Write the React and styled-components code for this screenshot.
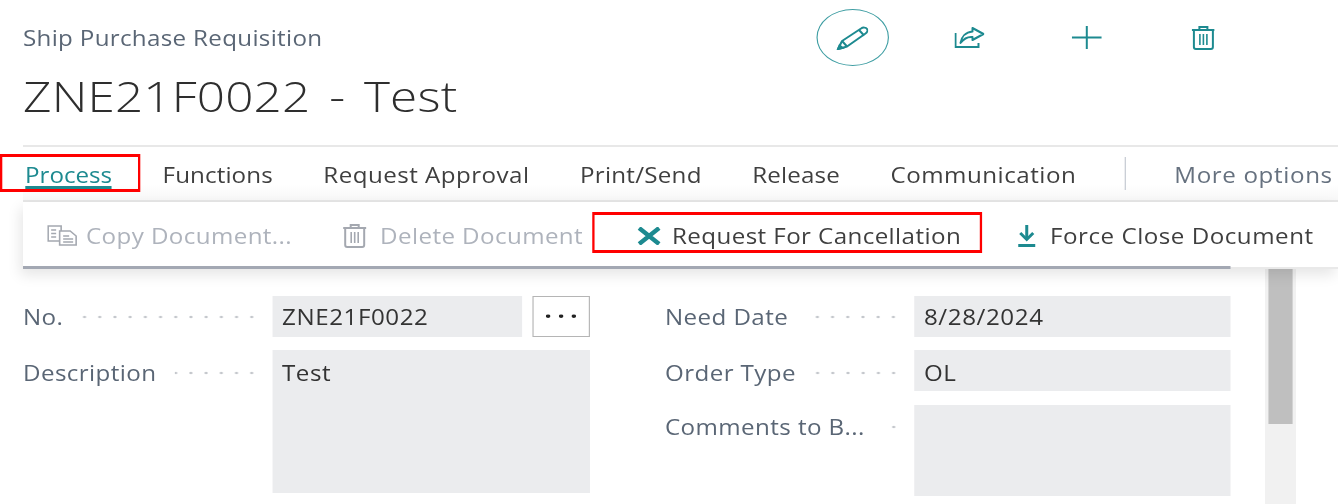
import React from "react";
import styled, { createGlobalStyle } from "styled-components";

const GlobalStyle = createGlobalStyle`
  html, body {
    margin: 0;
    padding: 0;
    background: #fff;
    overflow: hidden;
  }
  * { box-sizing: border-box; }
`;

const TEAL = "#1d8a90";

// the whole capture is wider than it is tall, so the page is laid out narrow and stretched
const STRETCH = 1.15;
const sx = (n) => +(n / STRETCH).toFixed(2);

const tabs = [
  { label: "Functions", spacing: 0.1 },
  { label: "Request Approval", spacing: 0.4 },
  { label: "Print/Send", spacing: 0.22 },
  { label: "Release", spacing: 0.14 },
  { label: "Communication", spacing: 0.45 },
];

const Icon = ({ w, h, children, stroke = TEAL, weight = 2 }) => (
  <svg
    width={sx(w)}
    height={h}
    viewBox={`0 0 ${w} ${h}`}
    preserveAspectRatio="none"
    fill="none"
    stroke={stroke}
    strokeWidth={weight}
  >
    {children}
  </svg>
);

const PencilIcon = () => (
  <Icon w={32} h={24}>
    <path d="M2 23 L6 15 L25 2.5 C27 1 30 1.5 31 3 C32 4.5 31 6.5 29.5 7.5 L11 20.5 Z" strokeLinejoin="round" />
    <path d="M6 15 L11 20.5 M23 4 L28 9.5" />
    <path d="M2 23 L3.5 19.5 L6.5 22 Z" fill={TEAL} />
  </Icon>
);

const ShareIcon = () => (
  <Icon w={30} h={21}>
    <path d="M1 6 V20 H24 V16" />
    <path d="M18 1 L29 7 L18 13 V10 C13 9.5 9 12 6 16 C7 10 11 5 18 4.5 Z" strokeLinejoin="round" />
  </Icon>
);

const PlusIcon = () => (
  <Icon w={30} h={23}>
    <path d="M0 11.5 H30 M15 0 V23" />
  </Icon>
);

const TrashIcon = ({ color = TEAL }) => (
  <Icon w={24} h={24} stroke={color} weight={2}>
    <path d="M0.5 4 H23.5" />
    <path d="M8 4 V1 H16 V4" />
    <path d="M2.5 4 V21 C2.5 22.2 3.3 23 4.5 23 H19.5 C20.7 23 21.5 22.2 21.5 21 V4" />
    <path d="M8.5 8 V19 M12 8 V19 M15.5 8 V19" strokeWidth="1.6" />
  </Icon>
);

const CopyIcon = () => (
  <Icon w={30} h={21} stroke="#a4a8b0" weight={1.6}>
    <path d="M12 16 H1 V1 H14 V6" />
    <path d="M12.5 6 H23 L29 11 V20 H12.5 Z" />
    <path d="M4 5 H9 M4 8.5 H9 M4 12 H9 M16 11 H22 M16 14 H26 M16 17 H26" />
  </Icon>
);

const CrossIcon = () => (
  <Icon w={24} h={18} weight={4.4}>
    <path d="M2 1 L22 17 M22 1 L2 17" />
  </Icon>
);

const DownIcon = () => (
  <Icon w={18} h={22} weight={3}>
    <path d="M9 0 V13" />
    <path d="M2.5 8 L9 14.5 L15.5 8" />
    <path d="M0.5 20.5 H17.5" />
  </Icon>
);

const App = () => {
  return (
    <Page>
      <GlobalStyle />
      <Header>
        <TitleBlock>
          <Caption>Ship Purchase Requisition</Caption>
          <Title>ZNE21F0022 - Test</Title>
        </TitleBlock>
        <Actions>
          <EditButton><PencilIcon /></EditButton>
          <ActionIcon $width={160}><ShareIcon /></ActionIcon>
          <ActionIcon $width={76}><PlusIcon /></ActionIcon>
          <ActionIcon $width={156}><TrashIcon /></ActionIcon>
        </Actions>
      </Header>

      <TabBar>
        <ActiveTab>
          <TabLabel $active $spacing={0}>Process</TabLabel>
          <RedFrame $box="tab" />
        </ActiveTab>
        {tabs.map((t) => (
          <TabLabel key={t.label} $spacing={t.spacing}>{t.label}</TabLabel>
        ))}
        <TabDivider />
        <MoreOptions $spacing={0.55}>More options</MoreOptions>
      </TabBar>

      <CommandPanel>
        <Command $disabled>
          <CopyIcon />
          <span>Copy Document...</span>
        </Command>
        <Command $disabled $gap={13} $left={51}>
          <TrashIcon color="#a4a8b0" />
          <span>Delete Document</span>
        </Command>
        <MarkedCommand>
          <CrossIcon />
          <span>Request For Cancellation</span>
          <RedFrame $box="command" />
        </MarkedCommand>
        <Command $gap={14} $left={36}>
          <DownIcon />
          <ForceLabel>Force Close Document</ForceLabel>
        </Command>
      </CommandPanel>

      <Body>
        <FormColumn $width={567}>
          <FieldRow $line={41}>
            <FieldLabel>
              <LabelText>No.</LabelText>
              <Leader />
            </FieldLabel>
            <Value>ZNE21F0022</Value>
            <DotsButton>···</DotsButton>
          </FieldRow>
          <FieldRow>
            <FieldLabel>
              <LabelText>Description</LabelText>
              <Leader />
            </FieldLabel>
            <Value $height={143}>Test</Value>
          </FieldRow>
        </FormColumn>
        <FormColumn $width={566} $left={75}>
          <FieldRow $line={41}>
            <FieldLabel>
              <LabelText>Need Date</LabelText>
              <Leader />
            </FieldLabel>
            <Value>8/28/2024</Value>
          </FieldRow>
          <FieldRow>
            <FieldLabel>
              <LabelText>Order Type</LabelText>
              <Leader />
            </FieldLabel>
            <Value>OL</Value>
          </FieldRow>
          <FieldRow $top={1} $line={43}>
            <FieldLabel>
              <LabelText>Comments to B...</LabelText>
              <Leader />
            </FieldLabel>
            <Value $height={91} />
          </FieldRow>
        </FormColumn>
        <ScrollTrack>
          <ScrollThumb />
        </ScrollTrack>
      </Body>
    </Page>
  );
};

const Page = styled.div`
  width: ${sx(1340)}px;
  height: 504px;
  overflow: hidden;
  background: #fff;
  font-family: "Open Sans", "Noto Sans", sans-serif;
  display: flex;
  flex-direction: column;
  transform: scaleX(${STRETCH});
  transform-origin: left top;
  filter: blur(0.3px);
`;

const Header = styled.div`
  display: flex;
  height: 145px;
  padding-left: ${sx(23)}px;
`;

const TitleBlock = styled.div`
  width: ${sx(793)}px;
`;

const Caption = styled.div`
  margin-top: 23px;
  height: 30px;
  line-height: 30px;
  font-size: 21px;
  letter-spacing: 0.28px;
  white-space: nowrap;
  color: #5a6675;
`;

const Title = styled.div`
  margin-top: 12px;
  height: 62px;
  line-height: 62px;
  font-size: 43px;
  font-weight: 300;
  letter-spacing: 0.15px;
  word-spacing: 5px;
  white-space: nowrap;
  color: #2e2e2e;
`;

const Actions = styled.div`
  display: flex;
  align-items: flex-start;
  padding-top: 9px;
`;

const EditButton = styled.div`
  width: ${sx(73)}px;
  height: 57px;
  border: 1.5px solid #3f9ea3;
  border-radius: 50%;
  display: flex;
  align-items: center;
  justify-content: center;
`;

const ActionIcon = styled.div`
  width: ${(p) => sx(p.$width)}px;
  height: 57px;
  display: flex;
  align-items: center;
  justify-content: center;
`;

const TabBar = styled.div`
  height: 57px;
  margin-left: ${sx(23)}px;
  padding-top: 2px;
  border-top: 2px solid #e8e8e8;
  border-bottom: 2px solid #e6e6e6;
  display: flex;
  align-items: center;
  gap: ${sx(50.5)}px;
  background: linear-gradient(#fff 70%, #f7f7f7);
`;

const ActiveTab = styled.div`
  position: relative;
  display: flex;
  margin-left: ${sx(2)}px;
`;

const TabLabel = styled.div`
  height: 28px;
  line-height: 28px;
  font-size: 21px;
  letter-spacing: ${(p) => p.$spacing}px;
  white-space: nowrap;
  color: ${(p) => (p.$active ? TEAL : "#3f3f3f")};
  border-bottom: ${(p) => (p.$active ? `3px solid ${TEAL}` : "none")};
`;

const RedFrame = styled.div`
  position: absolute;
  border-style: solid;
  border-color: #f00;
  border-width: 3px ${sx(3)}px;
  pointer-events: none;
  ${(p) =>
    p.$box === "tab"
      ? `left: ${sx(-25)}px; right: ${sx(-28)}px; top: -7px; height: 38px;`
      : "left: 0; right: 0; top: -10px; height: 41px;"}
`;

const TabDivider = styled.div`
  width: ${sx(1)}px;
  height: 33px;
  margin: -3px 0 0 ${sx(-2)}px;
  background: #c2c7cf;
`;

const MoreOptions = styled(TabLabel)`
  color: #66717f;
  margin-left: ${sx(-2)}px;
`;

const CommandPanel = styled.div`
  position: relative;
  z-index: 1;
  height: 67px;
  margin-left: ${sx(23)}px;
  padding: 10px 0 8px ${sx(24)}px;
  display: flex;
  align-items: center;
  background: #fff;
  border-bottom: 2px solid #e9e9e9;
  box-shadow: -3px 6px 12px rgba(0, 0, 0, 0.1);
  &::after {
    content: "";
    position: absolute;
    left: 0;
    bottom: -2px;
    width: ${sx(1208)}px;
    height: 3px;
    background: #a3a8b3;
  }
`;

const Command = styled.div`
  display: flex;
  align-items: center;
  gap: ${(p) => sx(p.$gap || 9)}px;
  margin-left: ${(p) => sx(p.$left || 0)}px;
  font-size: 21px;
  letter-spacing: 0.35px;
  white-space: nowrap;
  color: ${(p) => (p.$disabled ? "#aeb3bc" : "#3f3f3f")};
`;

const MarkedCommand = styled(Command)`
  position: relative;
  width: ${sx(390)}px;
  margin-left: ${sx(9)}px;
  padding-left: ${sx(45)}px;
  gap: ${sx(11)}px;
`;

const ForceLabel = styled.span`
  letter-spacing: 0.45px;
`;

const Body = styled.div`
  flex: 1;
  display: flex;
  padding-left: ${sx(23)}px;
  min-height: 0;
`;

const FormColumn = styled.div`
  width: ${(p) => sx(p.$width)}px;
  margin-left: ${(p) => sx(p.$left || 0)}px;
  padding-top: 27px;
  display: flex;
  flex-direction: column;
  gap: 13px;
`;

const FieldRow = styled.div`
  --line: ${(p) => p.$line || 45}px;
  display: flex;
  align-items: flex-start;
  margin-top: ${(p) => p.$top || 0}px;
`;

const FieldLabel = styled.div`
  width: ${sx(249)}px;
  height: 41px;
  padding: calc((var(--line) - 41px) * 0.75 + 1.5px) ${sx(13)}px 0 0;
  display: flex;
  align-items: center;
  gap: ${sx(18)}px;
  flex: none;
`;

const LabelText = styled.span`
  font-size: 21px;
  letter-spacing: 0.36px;
  white-space: nowrap;
  color: #5a6675;
`;

const Leader = styled.span`
  flex: 1;
  height: 6px;
  background: radial-gradient(circle, #c4c7cc 1.1px, transparent 1.6px) right center / ${sx(15.2)}px 6px repeat-x;
`;

const Value = styled.div`
  flex: 1;
  height: ${(p) => p.$height || 41}px;
  padding: 1px ${sx(10)}px 0;
  line-height: var(--line);
  font-size: 21px;
  letter-spacing: 0.5px;
  color: #333;
  background: #ebecee;
`;

const DotsButton = styled.div`
  width: ${sx(58)}px;
  height: 41px;
  margin-left: ${sx(10)}px;
  padding-left: 5px;
  border: 1px solid #b5b5b5;
  text-align: center;
  line-height: 36px;
  font-size: 22px;
  font-weight: 700;
  letter-spacing: 5px;
  color: #222;
`;

const ScrollTrack = styled.div`
  width: ${sx(31)}px;
  margin-left: ${sx(34)}px;
  padding: 0 ${sx(3)}px;
  background: #f1f1f1;
`;

const ScrollThumb = styled.div`
  height: 155px;
  background: #bfbfbf;
`;

export default App;
